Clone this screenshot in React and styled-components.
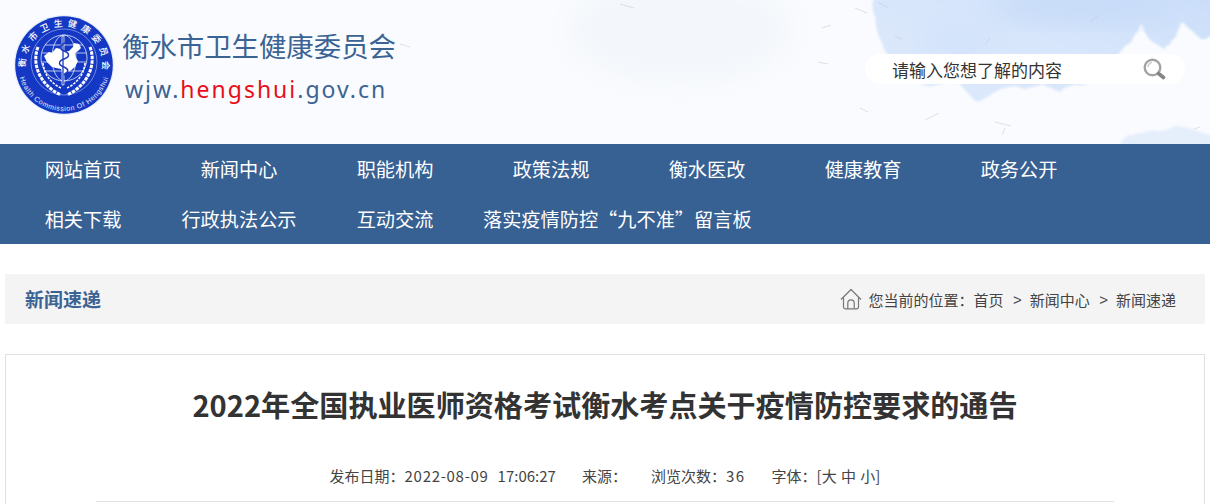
import styled, { createGlobalStyle } from "styled-components";

const NAV_ITEMS = [
  "网站首页",
  "新闻中心",
  "职能机构",
  "政策法规",
  "衡水医改",
  "健康教育",
  "政务公开",
  "相关下载",
  "行政执法公示",
  "互动交流",
  "落实疫情防控“九不准”留言板",
];

// loose paper fibres on the header wash
const FIBRES = [
  "M855 8 l12 5",
  "M822 28 l9 -3",
  "M818 62 l10 2",
  "M895 36 l7 3",
  "M985 45 l5 -7",
  "M925 120 l14 -7",
  "M995 122 l16 4",
  "M1005 128 l-3 7",
  "M1200 127 l-6 2",
  "M860 108 l8 4",
  "M878 2 l10 6",
  "M620 4 l14 4",
  "M1090 22 l8 -6",
  "M400 44 l10 3",
];

const GlobalStyle = createGlobalStyle`
  html, body {
    margin: 0;
    padding: 0;
    height: 100%;
    overflow: hidden;
    background: #fff;
    font-family: "Noto Sans CJK SC", "Liberation Sans", sans-serif;
    color: #333;
  }
`;

function Logo() {
  return (
    <LogoSvg viewBox="0 0 100 100">
      <defs>
        <path id="arcTop" d="M 16.660 69.250 A 38.500 38.500 0 1 1 83.340 69.250" />
        <path id="arcBottom" d="M 4.700 58 A 46 46 0 0 0 95.300 58" />
      </defs>
      <circle cx="50" cy="50" r="50" fill="#e6eefa" />
      <circle cx="50" cy="50" r="48.800" fill="#1538c4" />
      <circle cx="50" cy="47" r="33" fill="none" stroke="#c9d4f3" strokeWidth="0.500" />
      <text fill="#fff" fontSize="9" fontWeight="500">
        <textPath href="#arcTop" startOffset="52%" textAnchor="middle" letterSpacing="4.200">
          衡水市卫生健康委员会
        </textPath>
      </text>
      <text fill="#e6ecfa" fontSize="7" fontFamily="Liberation Sans">
        <textPath href="#arcBottom" startOffset="50%" textAnchor="middle" letterSpacing="0.600">
          Health Commission Of Hengshui
        </textPath>
      </text>
      <g fill="none" stroke="#dfe7fa" strokeWidth="0.800">
        <circle cx="50" cy="43" r="23" />
        <ellipse cx="50" cy="43" rx="12" ry="23" />
        <path d="M31 30 H69 M27.500 38 H72.500 M27.500 47 H72.500 M31 56 H69" />
      </g>
      <path
        d="M30 41 L35 37 L38 38 L42 33 L47 34 L50 37 L55 36 L59 32 L60 28 L65 29 L67 33 L64 36 L61 38 L62 43 L64 46 L61 52 L56 56 L50 58 L47 54 L42 53 L38 52 L33 47 Z"
        fill="#fff"
      />
      <path d="M48 21 H50 V70 H48 Z" fill="#1c3cba" stroke="#fff" strokeWidth="0.700" />
      <path
        d="M53 27 C45 30 45 34 50 36 C56 38 56 42 50 44 C44 46 44 50 50 52 C55 54 55 57 50 60"
        fill="none"
        stroke="#1c3cba"
        strokeWidth="1.500"
      />
      <g fill="none" stroke="#fff">
        <path d="M24 32 C17 50 27 71 47 80" strokeWidth="3" strokeDasharray="3.500 1" />
        <path d="M76 32 C83 50 73 71 53 80" strokeWidth="3" strokeDasharray="3.500 1" />
        <path d="M29 48 C30 60 38 69 47 73" strokeWidth="1.600" strokeDasharray="2.500 1.200" />
        <path d="M71 48 C70 60 62 69 53 73" strokeWidth="1.600" strokeDasharray="2.500 1.200" />
      </g>
    </LogoSvg>
  );
}

function SearchIcon() {
  return (
    <svg width="23" height="22" viewBox="0 0 23 22">
      <circle cx="9.500" cy="9.500" r="7.800" fill="#fff" stroke="#a2a2a2" strokeWidth="2.400" />
      <path d="M5 9 A5 5 0 0 1 9 4.500" fill="none" stroke="#d0d0d0" strokeWidth="1.600" />
      <path d="M15.500 15.500 L20.500 19.500" stroke="#858585" strokeWidth="3.600" strokeLinecap="round" />
    </svg>
  );
}

function HomeIcon() {
  return (
    <svg width="22" height="22" viewBox="0 0 22 22" fill="none" stroke="#777" strokeWidth="1.200">
      <path d="M1 11.500 L11 1.500 L21 11.500" strokeLinejoin="round" />
      <path d="M3.500 9.500 V19 A1.800 1.800 0 0 0 5.300 20.800 H16.700 A1.800 1.800 0 0 0 18.500 19 V9.500" />
      <path d="M7.800 20.800 V15 A3.200 3.200 0 0 1 14.200 15 V20.800" />
    </svg>
  );
}

function App() {
  return (
    <>
      <GlobalStyle />
      <Header>
        <HeaderArt viewBox="0 0 1210 144" preserveAspectRatio="none">
          <defs>
            <filter id="ragged" x="-5%" y="-10%" width="110%" height="120%">
              <feTurbulence type="fractalNoise" baseFrequency="0.035" numOctaves="3" seed="4" />
              <feDisplacementMap in="SourceGraphic" scale="9" />
              <feGaussianBlur stdDeviation="1" />
            </filter>
            <filter id="cloud" x="-30%" y="-30%" width="160%" height="160%">
              <feGaussianBlur stdDeviation="14" />
            </filter>
            <linearGradient id="wash" x1="0" y1="1" x2="1" y2="0">
              <stop offset="0" stopColor="#dde9fc" />
              <stop offset="0.5" stopColor="#d8e6fb" />
              <stop offset="1" stopColor="#c9ddf9" />
            </linearGradient>
          </defs>
          <ellipse cx="680" cy="30" rx="110" ry="50" fill="#f3f6fa" filter="url(#cloud)" />
          <path
            d="M874 -8 C874 25 880 50 900 72 L925 84 L960 84 L975 101 L990 92 L1010 88 L1025 90 L1040 82 L1060 92 L1085 84 L1115 60 L1128 45 L1140 22 L1150 40 L1165 50 L1185 25 L1200 38 L1220 32 V-8 Z"
            fill="url(#wash)"
            filter="url(#ragged)"
          />
          <ellipse cx="1080" cy="6" rx="90" ry="16" fill="#c6daf8" filter="url(#cloud)" />
          <ellipse cx="960" cy="40" rx="40" ry="20" fill="#d3e3fb" filter="url(#cloud)" />
          <ellipse cx="1175" cy="146" rx="52" ry="17" fill="#e5effc" filter="url(#ragged)" />
          <g stroke="#b9c4d4" strokeWidth="0.800" opacity="0.600">
            {FIBRES.map((d) => (
              <path key={d} d={d} />
            ))}
          </g>
        </HeaderArt>
        <Brand>
          <Logo />
          <BrandText>
            <BrandName>衡水市卫生健康委员会</BrandName>
            <BrandUrl>
              wjw.<em>hengshui</em>.gov.cn
            </BrandUrl>
          </BrandText>
        </Brand>
        <SearchBox>
          <SearchHint>请输入您想了解的内容</SearchHint>
          <SearchIcon />
        </SearchBox>
      </Header>

      <Nav>
        <NavList>
          {NAV_ITEMS.map((item) => (
            <NavItem key={item}>{item}</NavItem>
          ))}
        </NavList>
      </Nav>

      <Main>
        <CrumbBar>
          <SectionName>新闻速递</SectionName>
          <Crumbs>
            <HomeIcon />
            <CrumbLabel>您当前的位置：</CrumbLabel>
            <span>首页</span>
            <CrumbSep>&gt;</CrumbSep>
            <span>新闻中心</span>
            <CrumbSep>&gt;</CrumbSep>
            <span>新闻速递</span>
          </Crumbs>
        </CrumbBar>

        <Article>
          <ArticleTitle>2022年全国执业医师资格考试衡水考点关于疫情防控要求的通告</ArticleTitle>
          <Meta>
            <span>
              发布日期：<MetaDate>2022-08-09</MetaDate>
              <MetaTime>17:06:27</MetaTime>
            </span>
            <MetaSource>来源：</MetaSource>
            <span>
              浏览次数：<MetaCount>36</MetaCount>
            </span>
            <MetaFont>字体：[大 中 小]</MetaFont>
          </Meta>
        </Article>
      </Main>
    </>
  );
}

const Header = styled.header`
  position: relative;
  height: 144px;
  overflow: hidden;
  background: #f9fbfe;
  display: flex;
  justify-content: space-between;
  align-items: flex-start;
`;

const HeaderArt = styled.svg`
  position: absolute;
  inset: 0;
  width: 100%;
  height: 100%;
`;

const Brand = styled.div`
  position: relative;
  display: flex;
  align-items: flex-start;
  gap: 8px;
  padding: 15px 0 0 14px;
`;

const LogoSvg = styled.svg`
  width: 100px;
  height: 100px;
  flex: none;
`;

const BrandText = styled.div`
  display: flex;
  flex-direction: column;
  padding-top: 10px;
`;

const BrandName = styled.div`
  font-size: 27.400px;
  line-height: 40px;
  color: #3b6394;
  white-space: nowrap;
`;

const BrandUrl = styled.div`
  margin: 8px 0 0 3px;
  font-family: "Noto Sans", "Liberation Sans", sans-serif;
  font-size: 23px;
  line-height: 32px;
  letter-spacing: 2px;
  color: #3b6394;
  white-space: nowrap;

  em {
    font-style: normal;
    color: #e60f19;
  }
`;

const SearchBox = styled.div`
  position: relative;
  width: 320px;
  height: 30px;
  margin: 54px 25px 0 0;
  padding: 0 19px 0 27px;
  box-sizing: border-box;
  display: flex;
  align-items: center;
  justify-content: space-between;
  background: #fff;
  border-radius: 15px;
`;

const SearchHint = styled.span`
  font-size: 17px;
  color: #333;
`;

const Nav = styled.nav`
  height: 100px;
  background: #376093;
`;

const NavList = styled.div`
  display: flex;
  flex-wrap: wrap;
  padding-left: 5px;
`;

const NavItem = styled.div`
  box-sizing: border-box;
  min-width: 156px;
  height: 50px;
  padding: 0 10px;
  font-size: 19.200px;
  line-height: 50px;
  text-align: center;
  color: #fff;
  white-space: nowrap;
`;

const Main = styled.main`
  padding: 30px 5px 0;
  display: flex;
  flex-direction: column;
  gap: 30px;
`;

const CrumbBar = styled.div`
  height: 50px;
  padding: 0 29px 0 20px;
  display: flex;
  align-items: center;
  justify-content: space-between;
  background: #f4f4f4;
`;

const SectionName = styled.h2`
  margin: 0 0 2px;
  font-size: 19px;
  font-weight: 700;
  color: #3b6394;
`;

const Crumbs = styled.div`
  display: flex;
  align-items: center;
  font-size: 15px;
  color: #444;
`;

const CrumbLabel = styled.span`
  margin-left: 6px;
`;

const CrumbSep = styled.span`
  margin: 0 8px 0 9.500px;
  font-family: "Liberation Sans", sans-serif;
`;

const Article = styled.article`
  min-height: 300px;
  box-sizing: border-box;
  border: 1px solid #e1e1e1;
  padding: 0 90px;
`;

const ArticleTitle = styled.h1`
  margin: 0;
  padding-top: 27px;
  font-size: 29.100px;
  line-height: 44px;
  font-weight: 700;
  text-align: center;
  color: #333;
`;

const Meta = styled.div`
  margin-top: 38px;
  padding-bottom: 13px;
  display: flex;
  justify-content: center;
  gap: 26px;
  font-size: 15px;
  line-height: 24px;
  color: #444;
  border-bottom: 1px solid #e1e1e1;
`;

const MetaDate = styled.span`
  letter-spacing: 0.700px;
`;

const MetaTime = styled.span`
  margin-left: 9px;
`;

const MetaCount = styled.span`
  letter-spacing: 1.500px;
`;

const MetaSource = styled.span`
  width: 43px;
  white-space: nowrap;
`;

const MetaFont = styled.span`
  word-spacing: 1px;
`;

export default App;
